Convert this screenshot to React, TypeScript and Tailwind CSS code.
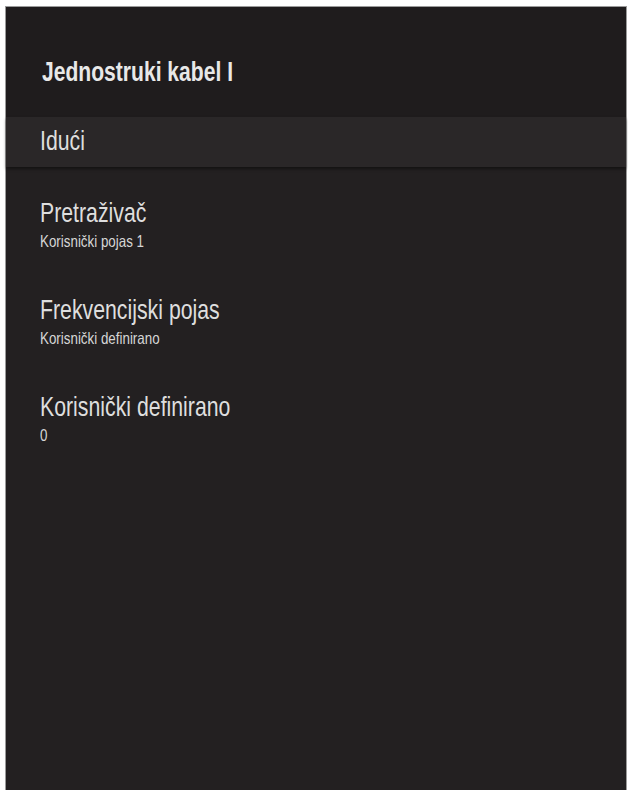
import React from "react";

const font = { fontFamily: '"Liberation Sans", Arial, sans-serif' };

const items = [
  { label: "Pretraživač", sub: "Korisnički pojas 1" },
  { label: "Frekvencijski pojas", sub: "Korisnički definirano" },
  { label: "Korisnički definirano", sub: "0" },
];

export default function App() {
  return (
    <div className="w-[628px] h-[790px] bg-white pt-[6px] pl-[5px] pr-[1px] overflow-hidden" style={font}>
      <div className="h-full bg-[#232021] border-l border-t border-r border-[#9b9b9b] flex flex-col">
        <div className="h-[110px] bg-[#1f1c1d] pt-[49px] pl-[36px]">
          <div className="inline-block origin-left scale-x-[0.753] whitespace-nowrap text-[28px] leading-[32px] font-bold text-[#e8e8e8]">
            Jednostruki kabel I
          </div>
        </div>
        <div className="h-[50px] bg-[#2a2728] pt-[8px] pl-[34px] shadow-[0_2px_3px_rgba(0,0,0,0.45)] relative">
          <div className="inline-block origin-left scale-x-[0.76] whitespace-nowrap text-[28px] leading-[32px] text-[#dedede]">
            Idući
          </div>
        </div>
        <div className="flex flex-col gap-[43px] pt-[30px] pl-[34px]">
          {items.map((it) => (
            <div key={it.label} className="flex flex-col items-start">
              <div className="inline-block origin-left scale-x-[0.76] whitespace-nowrap text-[28px] leading-[32px] text-[#dedede]">
                {it.label}
              </div>
              <div className="inline-block origin-left scale-x-[0.81] whitespace-nowrap mt-[2px] text-[16.5px] leading-[20px] text-[#d6d6d6]">
                {it.sub}
              </div>
            </div>
          ))}
        </div>
      </div>
    </div>
  );
}
